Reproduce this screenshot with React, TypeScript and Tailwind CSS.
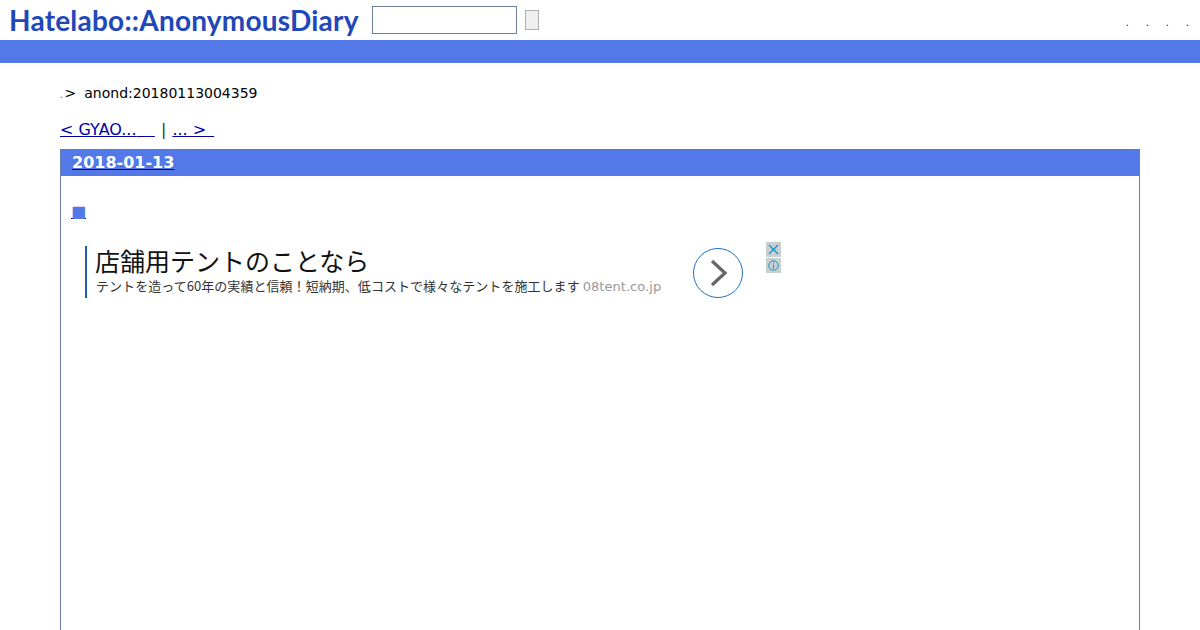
export default function App() {
  return (
    <div className="h-[630px] w-[1200px] overflow-hidden bg-white font-['DejaVu_Sans',sans-serif] text-black">
      <header className="flex h-10 items-center">
        <a className="ml-[9px] w-[349px] whitespace-nowrap font-['Lato',sans-serif] text-[28px] leading-10 font-bold tracking-[0.22px] text-[#2147b8]">Hatelabo::AnonymousDiary</a>
        <input className="ml-[14px] h-7 w-[145px] border border-[#6b7f9e] bg-white" />
        <button className="ml-2 h-5 w-[14px] border border-[#b0b0b0] bg-[#efefef]" />
        <div className="ml-auto mr-[11px] mt-[6px] flex text-[10px] leading-none text-[#222]">
          <span className="w-5 text-right">.</span><span className="w-5 text-right">.</span><span className="w-5 text-right">.</span><span className="w-5 text-right">.</span>
        </div>
      </header>
      <div className="h-[23px] bg-[#5279e7]" />
      <main className="px-[60px]">
        <p className="mt-[21px] flex items-baseline text-[14px] leading-[18px]">
          <span className="text-[8px] text-[#333]">.</span>
          <span className="ml-[2px]">&gt;</span>
          <span className="ml-[8px]">anond:20180113004359</span>
        </p>
        <p className="mt-[12px] text-[16px] leading-[19px] text-[#333]">
          <a className="text-[#0000a8] underline" href="#">&lt; GYAO...<span className="text-[14.4px]">&nbsp;&nbsp;&nbsp;&nbsp;</span></a>
          <span className="mx-[1px]"> | </span>
          <a className="text-[#0000a8] underline" href="#">... &gt;<span className="text-[25px] leading-[19px]">&nbsp;</span></a>
        </p>
        <section className="mt-[9px] h-[600px] border border-t-[#5279e7] border-x-[#6b7faa] border-b-[#6b7faa]">
          <h2 className="h-[26px] bg-[#5279e7] pl-[11px] text-[16px] leading-[25px] font-bold text-white">
            <a className="underline decoration-[#0000a8]" href="#">2018-01-13</a>
          </h2>
          <div className="mt-[26px] pl-[10px] text-[16px] leading-[20px]">
            <a className="text-[#5279e7] underline decoration-[#0000a8]" href="#">■</a>
          </div>
          <div className="relative ml-[24px] mt-[24px] flex h-[52px] w-[696px]">
            <div className="flex h-[52px] w-[602px] flex-col border-l-2 border-[#1f5fa8] pl-2">
              <div className="whitespace-nowrap font-['Noto_Sans_CJK_JP',sans-serif] text-[25px] leading-[29px] text-[#111]">店舗用テントのことなら</div>
              <div className="mt-[2px] ml-px whitespace-nowrap font-['Noto_Sans_CJK_JP',sans-serif] text-[13px] leading-[17px] tracking-[0.05px] text-[#333]">テントを造って60年の実績と信頼！短納期、低コストで様々なテントを施工します <span className="font-['DejaVu_Sans',sans-serif] text-[#999]">08tent.co.jp</span></div>
            </div>
            <div className="absolute left-[608px] top-[2px] flex h-[50px] w-[50px] items-center justify-center rounded-full border-[1.5px] border-[#1f6fc0] bg-white">
              <svg width="20" height="28" viewBox="0 0 20 28" fill="none" stroke="#666" strokeWidth="3.2"><path d="M4 2l13 12-13 12" /></svg>
            </div>
            <div className="absolute left-[681px] top-[-4px] flex w-[15px] flex-col gap-px">
              <div className="flex h-[15px] items-center justify-center bg-[#c9d0d2]">
                <svg width="11" height="11" viewBox="0 0 11 11" stroke="#1a8fc4" strokeWidth="1.2"><path d="M1 1l9 9M10 1l-9 9" /></svg>
              </div>
              <div className="flex h-[15px] items-center justify-center bg-[#c9d0d2]">
                <svg width="11" height="11" viewBox="0 0 11 11" fill="none" stroke="#1a8fc4"><circle cx="5.5" cy="5.5" r="4.7" /><path d="M5.5 4.5v4M5.5 2.3v1.2" /></svg>
              </div>
            </div>
          </div>
        </section>
      </main>
    </div>
  );
}
